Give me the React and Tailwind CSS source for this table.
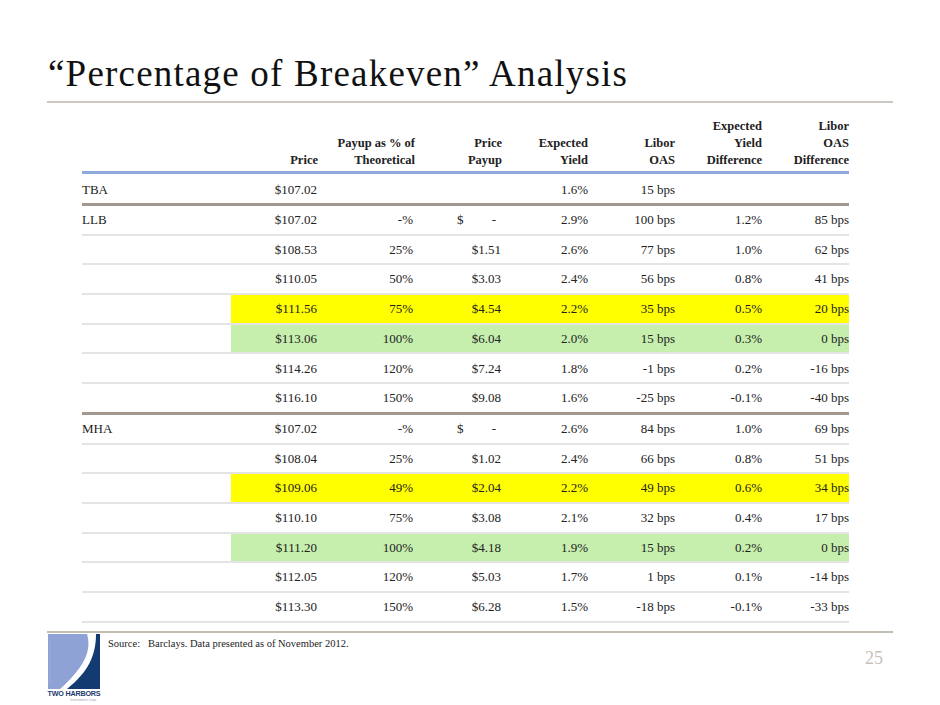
import React from 'react';

const COLS = 'grid grid-cols-[149px_87px_97px_87px_86px_87px_87px_87px]';

const group1 = [
  ['LLB', '$107.02', '-%', null, '2.9%', '100 bps', '1.2%', '85 bps', ''],
  ['', '$108.53', '25%', '$1.51', '2.6%', '77 bps', '1.0%', '62 bps', ''],
  ['', '$110.05', '50%', '$3.03', '2.4%', '56 bps', '0.8%', '41 bps', ''],
  ['', '$111.56', '75%', '$4.54', '2.2%', '35 bps', '0.5%', '20 bps', 'y'],
  ['', '$113.06', '100%', '$6.04', '2.0%', '15 bps', '0.3%', '0 bps', 'g'],
  ['', '$114.26', '120%', '$7.24', '1.8%', '-1 bps', '0.2%', '-16 bps', ''],
  ['', '$116.10', '150%', '$9.08', '1.6%', '-25 bps', '-0.1%', '-40 bps', ''],
];

const group2 = [
  ['MHA', '$107.02', '-%', null, '2.6%', '84 bps', '1.0%', '69 bps', ''],
  ['', '$108.04', '25%', '$1.02', '2.4%', '66 bps', '0.8%', '51 bps', ''],
  ['', '$109.06', '49%', '$2.04', '2.2%', '49 bps', '0.6%', '34 bps', 'y'],
  ['', '$110.10', '75%', '$3.08', '2.1%', '32 bps', '0.4%', '17 bps', ''],
  ['', '$111.20', '100%', '$4.18', '1.9%', '15 bps', '0.2%', '0 bps', 'g'],
  ['', '$112.05', '120%', '$5.03', '1.7%', '1 bps', '0.1%', '-14 bps', ''],
  ['', '$113.30', '150%', '$6.28', '1.5%', '-18 bps', '-0.1%', '-33 bps', ''],
];

function Row({ r, last }) {
  const [label, price, pct, payup, y, oas, yd, od, hl] = r;
  const bg = hl === 'y' ? 'bg-[#ffff00]' : hl === 'g' ? 'bg-[#c6efae]' : '';
  const border = last === 'brown'
    ? 'border-b-[3px] border-[#a29890]'
    : 'border-b-2 border-[#e4e4e4]';
  return (
    <div className={`${border}`}>
      <div className={`${COLS} h-[27.7px] items-center`}>
        <div className="h-full flex items-center">{label}</div>
        <div className={`${bg} h-full col-span-7 grid grid-cols-[87px_97px_87px_86px_87px_87px_87px] items-center text-right`}>
          <div className="pr-[1px]">{price}</div>
          <div className="pr-[2px]">{pct}</div>
          {payup === null ? (
            <div className="flex justify-between pl-[42px] pr-[6px]">
              <span>$</span>
              <span>-</span>
            </div>
          ) : (
            <div className="pr-[1px]">{payup}</div>
          )}
          <div>{y}</div>
          <div>{oas}</div>
          <div>{yd}</div>
          <div>{od}</div>
        </div>
      </div>
    </div>
  );
}

function Logo() {
  return (
    <div className="w-[54px] flex flex-col items-center">
      <svg width="52" height="55" viewBox="0 0 52 55">
        <path d="M0 0 H39 C43 14 40 30 12 55 H0 Z" fill="#8fa2d6" />
        <path d="M48 0 H52 V55 H19 C40 38 48 22 48 0 Z" fill="#143a72" />
        <line x1="2" y1="4" x2="2" y2="50" stroke="#b8c2e0" strokeWidth="0.6" strokeDasharray="1 1" />
      </svg>
      <div className="font-['Liberation_Sans',sans-serif] font-bold text-[7.2px] leading-[8px] text-[#1d3b6e] tracking-[-0.2px] mt-[1px] whitespace-nowrap">
        TWO HARBORS
      </div>
      <div className="font-['Liberation_Sans',sans-serif] text-[3.5px] leading-[4px] text-[#9aa0b0] self-end mr-[4px] whitespace-nowrap">
        Investment Corp.
      </div>
    </div>
  );
}

export default function App() {
  return (
    <div className="w-[940px] h-[705px] bg-white overflow-hidden font-['Liberation_Serif',serif] text-[#222]">
      <div className="pt-[55px] pl-[48px] text-[37px] leading-[37px] tracking-[1.2px] text-[#111] whitespace-nowrap">
        “Percentage of Breakeven” Analysis
      </div>
      <div className="ml-[47px] w-[846px] h-[2px] bg-[#ccc7c2] mt-[9px]" />

      <div className="ml-[82px] w-[767px] mt-[15px] text-[13px]">
        <div className={`${COLS} items-end text-right font-bold leading-[17px] pb-[2px] text-[12.5px]`}>
          <div />
          <div>Price</div>
          <div>Payup as % of<br />Theoretical</div>
          <div>Price<br />Payup</div>
          <div>Expected<br />Yield</div>
          <div>Libor<br />OAS</div>
          <div>Expected<br />Yield<br />Difference</div>
          <div>Libor<br />OAS<br />Difference</div>
        </div>
        <div className="h-[3px] bg-[#8eaadc]" />

        <div className="border-b-[3px] border-[#a29890]">
          <div className={`${COLS} h-[29px] items-center text-right pt-[3px]`}>
            <div className="text-left">TBA</div>
            <div className="pr-[1px]">$107.02</div>
            <div />
            <div />
            <div>1.6%</div>
            <div>15 bps</div>
            <div />
            <div />
          </div>
        </div>

        {group1.map((r, i) => (
          <Row key={'a' + i} r={r} last={i === group1.length - 1 ? 'brown' : ''} />
        ))}
        {group2.map((r, i) => (
          <Row key={'b' + i} r={r} last="" />
        ))}
      </div>

      <div className="ml-[47px] w-[846px] h-[2px] bg-[#c4bdb6] mt-[8px]" />
      <div className="ml-[47px] w-[846px] flex mt-[1px]">
        <Logo />
        <div className="ml-[7px] mt-[4px] text-[10.5px] leading-[12px] flex">
          <span className="w-[40px]">Source:</span>
          <span>Barclays. Data presented as of November 2012.</span>
        </div>
        <div className="ml-auto mr-[10px] mt-[14px] text-[18px] leading-[20px] text-[#c9c1b9]">25</div>
      </div>
    </div>
  );
}
